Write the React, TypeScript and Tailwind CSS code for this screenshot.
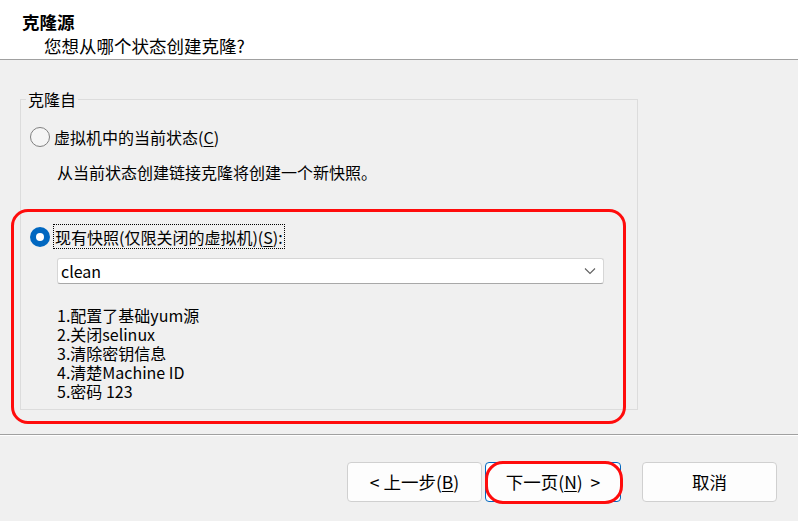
import React from "react";

const font = { fontFamily: '"Noto Sans CJK SC", "Noto Sans", sans-serif' };

function Btn({ children, focused }: { children: React.ReactNode; focused?: boolean }) {
  return (
    <div
      className={
        "flex h-[40px] items-center justify-center rounded-[4px] bg-[#fdfdfd] text-[17.5px] leading-[20px] text-black " +
        (focused ? "w-[136px] border border-[#0067c0]" : "w-[135px] border border-[#d0d0d0]")
      }
    >
      {children}
    </div>
  );
}

export default function App() {
  return (
    <div className="relative h-[521px] w-[798px] overflow-hidden bg-[#f0f0f0] text-black" style={font}>
      {/* header */}
      <div className="h-[60px] border-b border-[#a0a0a0] bg-white">
        <div className="pl-[22px] pt-[11px] text-[17.5px] font-bold leading-[22px]">克隆源</div>
        <div className="pl-[44px] pt-[2px] text-[17.5px] leading-[22px]">您想从哪个状态创建克隆?</div>
      </div>

      {/* body */}
      <div className="h-[374px] pl-[20px] pt-[39px]">
        <div className="relative h-[311px] w-[618px] border border-[#dcdcdc]">
          <div className="absolute left-[5px] top-[-11px] bg-[#f0f0f0] px-[2px] text-[16px] leading-[20px]">克隆自</div>

          <div className="mt-[27px] flex h-[20px] items-center pl-[9px]">
            <div className="h-[20px] w-[20px] rounded-full border border-[#808080] bg-[#f5f5f5]" />
            <div className="ml-[4px] text-[16px] leading-[20px]">
              虚拟机中的当前状态(<span className="underline underline-offset-2">C</span>)
            </div>
          </div>

          <div className="ml-[36px] mt-[15px] text-[16px] leading-[20px]">从当前状态创建链接克隆将创建一个新快照。</div>

          <div className="mt-[42px] flex h-[25px] items-center pl-[9px]">
            <div className="flex h-[20px] w-[20px] items-center justify-center rounded-full bg-[#0067c0]">
              <div className="h-[8px] w-[8px] rounded-full bg-white" />
            </div>
            <div className="ml-[3px] flex h-[25px] items-center border border-dotted border-black px-[1px] text-[16px] leading-[20px]">
              现有快照(仅限关闭的虚拟机)(<span className="underline underline-offset-2">S</span>):
            </div>
          </div>

          <div className="ml-[36px] mt-[9px] flex h-[26px] w-[547px] items-center justify-between rounded-[3px] border border-[#d6d6d6] border-b-[#a8a8a8] bg-white pl-[3px] pr-[7px]">
            <span className="text-[16px] leading-[20px]">clean</span>
            <svg width="12" height="8" viewBox="0 0 12 8" fill="none">
              <path d="M1 1.5 L6 6.5 L11 1.5" stroke="#606060" strokeWidth="1.1" />
            </svg>
          </div>

          <div className="ml-[36px] mt-[22px] text-[16px] leading-[19px]">
            <div className="h-[19px]">1.配置了基础yum源</div>
            <div className="h-[19px]">2.关闭selinux</div>
            <div className="h-[19px]">3.清除密钥信息</div>
            <div className="h-[19px]">4.清楚Machine ID</div>
            <div className="h-[19px]">5.密码 123</div>
          </div>
        </div>
      </div>

      {/* footer */}
      <div className="border-t border-[#a0a0a0]">
        <div className="border-t border-white" />
        <div className="flex pl-[347px] pt-[26px]">
          <Btn>
            &lt; 上一步(<span className="underline underline-offset-2">B</span>)
          </Btn>
          <div className="ml-[3px]">
            <Btn focused>
              下一页(<span className="underline underline-offset-2">N</span>)&nbsp;&nbsp;&gt;
            </Btn>
          </div>
          <div className="ml-[21px]">
            <Btn>取消</Btn>
          </div>
        </div>
      </div>

      {/* red annotation overlays */}
      <div className="pointer-events-none absolute left-[11px] top-[209px] h-[215px] w-[615px] rounded-[17px] border-[3px] border-[#ff0c0c]" />
      <div className="pointer-events-none absolute left-[485px] top-[461px] h-[43px] w-[138px] rounded-[18px] border-[3px] border-[#ff0c0c]" />
    </div>
  );
}
